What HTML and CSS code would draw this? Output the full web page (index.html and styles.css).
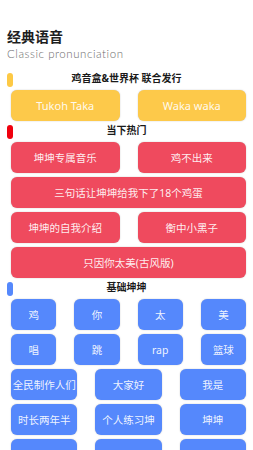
FILE: index.html
```html
<!DOCTYPE html>
<html lang="zh">
  <head>
    <meta charset="UTF-8" />
    <meta name="viewport" content="width=device-width, initial-scale=1.0" />
    <title>经典语音</title>
    <link rel="stylesheet" href="styles.css">
  </head>

  <body>
    <div class="head">
      <h1>经典语音</h1>
      <p>Classic pronunciation</p>
    </div>

    <div class="section">
      <div class="title"><i class="bar yellow"></i><span>鸡音盒&amp;世界杯 联合发行</span></div>
      <ul class="grid two">
        <li class="btn yellow">Tukoh Taka</li>
        <li class="btn yellow">Waka waka</li>
      </ul>
    </div>

    <div class="section">
      <div class="title"><i class="bar red"></i><span>当下热门</span></div>
      <ul class="grid two">
        <li class="btn red">坤坤专属音乐</li>
        <li class="btn red">鸡不出来</li>
        <li class="btn red wide">三句话让坤坤给我下了18个鸡蛋</li>
        <li class="btn red">坤坤的自我介绍</li>
        <li class="btn red">衡中小黑子</li>
        <li class="btn red wide">只因你太美(古风版)</li>
      </ul>
    </div>

    <div class="section">
      <div class="title"><i class="bar blue"></i><span>基础坤坤</span></div>
      <ul class="grid four">
        <li class="btn blue">鸡</li>
        <li class="btn blue">你</li>
        <li class="btn blue">太</li>
        <li class="btn blue">美</li>
        <li class="btn blue">唱</li>
        <li class="btn blue">跳</li>
        <li class="btn blue">rap</li>
        <li class="btn blue">篮球</li>
      </ul>
      <ul class="grid three">
        <li class="btn blue">全民制作人们</li>
        <li class="btn blue">大家好</li>
        <li class="btn blue">我是</li>
        <li class="btn blue">时长两年半</li>
        <li class="btn blue">个人练习坤</li>
        <li class="btn blue">坤坤</li>
        <li class="btn blue"></li>
        <li class="btn blue"></li>
        <li class="btn blue"></li>
      </ul>
    </div>
  </body>
</html>
```

FILE: styles.css
```css
* {
  margin: 0;
  padding: 0;
  box-sizing: border-box;
}

li {
  list-style: none;
}

body {
  background: #ffffff;
  font-family: "Noto Sans", "Noto Sans CJK SC", sans-serif;
}

.head {
  padding: 27px 7px 0;
  height: 73px;
}

.head h1 {
  font-size: 14px;
  line-height: 20px;
  font-weight: bold;
  color: #1e1e1e;
}

.head p {
  font-family: "Lato", sans-serif;
  font-size: 11.5px;
  font-weight: 300;
  line-height: 14px;
  letter-spacing: 0.55px;
  color: #6e6e6e;
}

.section {
  padding-bottom: 4px;
}

.title {
  display: grid;
  grid-template-columns: 6px 1fr 6px;
  height: 14px;
  padding: 0 7px;
  margin-bottom: 3px;
}

.title span {
  text-align: center;
  font-size: 10px;
  line-height: 10px;
  font-weight: bold;
  color: #1a1a1a;
}

.bar {
  display: block;
  height: 14px;
  border-radius: 3px;
}

.bar.yellow {
  background: #fdc945;
}

.bar.red {
  background: #f0000e;
}

.bar.blue {
  background: #5588fc;
}

.grid {
  display: grid;
  column-gap: 18px;
  row-gap: 4px;
  padding: 0 7px 0 11px;
}

.grid.two {
  grid-template-columns: 1fr 1fr;
}

.grid.three {
  grid-template-columns: 1fr 1fr 1fr;
  margin-top: 4px;
}

.grid.four {
  grid-template-columns: 1fr 1fr 1fr 1fr;
}

.btn {
  height: 31px;
  display: flex;
  align-items: center;
  justify-content: center;
  border-radius: 6px;
  font-size: 10.5px;
  color: rgba(255, 255, 255, 0.92);
  white-space: nowrap;
  box-shadow: 0 0 1.5px rgba(0, 0, 0, 0.25);
}

.btn.wide {
  grid-column: 1 / -1;
}

.btn.yellow {
  background: #fdc94a;
  font-size: 11px;
}

.btn.red {
  background: #ef4a5e;
}

.btn.blue {
  background: #5588fc;
}
```
